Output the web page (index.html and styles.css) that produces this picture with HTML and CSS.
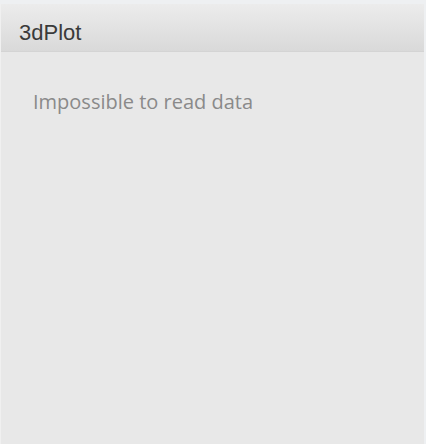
FILE: index.html
```html
<!DOCTYPE html>
<html>
<head>
<meta charset="utf-8">
<link rel="stylesheet" href="styles.css">
</head>
<body>
<div class="frame">
  <div class="panel">
    <div class="panel-header"><span class="title">3dPlot</span></div>
    <div class="panel-body">
      <p class="message">Impossible to read data</p>
    </div>
  </div>
</div>
</body>
</html>
```
FILE: styles.css
```css
html, body {
  margin: 0;
  padding: 0;
  height: 100%;
}
body {
  background: #eef0f2;
}
.frame {
  height: 100%;
  box-sizing: border-box;
  padding-top: 4px;
  padding-right: 2px;
  display: flex;
}
.panel {
  flex: 1;
  display: flex;
  flex-direction: column;
  background: #e8e8e8;
  border-left: 1px solid #f0f0f0;
}
.panel-header {
  height: 48px;
  box-sizing: border-box;
  padding: 18px 0 0 18px;
  font-family: "Liberation Sans", Arial, sans-serif;
  font-size: 22px;
  line-height: 22px;
  color: #3a3a3a;
  background: linear-gradient(#ececec, #d9d9d9);
  border-bottom: 1px solid #d4d4d4;
}
.title {
  display: block;
}
.panel-body {
  flex: 1;
  padding: 36px 32px;
}
.message {
  margin: 0;
  font-family: "Open Sans", sans-serif;
  font-size: 20px;
  color: #8a8a8a;
}
```
